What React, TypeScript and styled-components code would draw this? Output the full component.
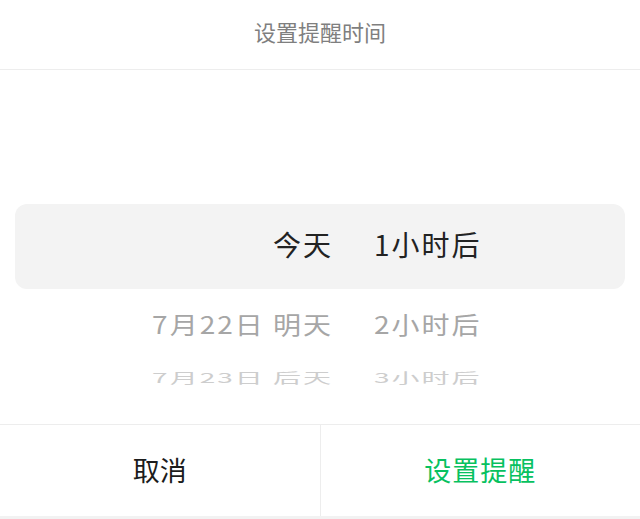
import styled, { createGlobalStyle } from "styled-components";

const GlobalStyle = createGlobalStyle`
    html, body {
        margin: 0;
        padding: 0;
        background: #f2f2f2;
    }

    body {
        font-family: "Noto Sans CJK SC", "Noto Sans", sans-serif;
        -webkit-font-smoothing: antialiased;
    }
`;

const Sheet = styled.div`
    width: 640px;
    height: 516px;
    background: #ffffff;
    display: flex;
    flex-direction: column;
`;

const Header = styled.div`
    height: 69px;
    box-sizing: content-box;
    border-bottom: 1px solid #ededed;
    display: flex;
    justify-content: center;
`;

const Title = styled.h2`
    margin: 17px 0 0;
    font-size: 22px;
    line-height: 28px;
    font-weight: 400;
    color: #7f7f7f;
`;

const Picker = styled.div`
    flex: 1;
    overflow: hidden;
    padding-top: 134px;
    display: flex;
    flex-direction: column;
`;

const Highlight = styled.div`
    margin: 0 15px;
    height: 85px;
    border-radius: 12px;
    background: #f3f3f3;
    display: flex;
    align-items: center;
`;

const Row = styled.div<{ $inset: boolean; $height: number; $scale: number; $color: string }>`
    display: grid;
    grid-template-columns: ${(p) => (p.$inset ? "318px" : "333px")} 1fr;
    column-gap: 41px;
    width: 100%;
    height: ${(p) => p.$height}px;
    box-sizing: border-box;
    padding-bottom: 5px;
    align-items: center;
    font-size: 28px;
    line-height: 34px;
    letter-spacing: 2px;
    color: ${(p) => p.$color};
    transform: scaleY(${(p) => p.$scale});
`;

const DateCell = styled.span`
    text-align: right;
    white-space: pre;
`;

const HourCell = styled.span`
    text-align: left;
`;

const Footer = styled.div`
    height: 91px;
    border-top: 1px solid #ededed;
    display: flex;
`;

const ActionButton = styled.button<{ $primary?: boolean }>`
    flex: 1;
    border: none;
    background: transparent;
    font-family: inherit;
    font-size: 27px;
    letter-spacing: ${(p) => (p.$primary ? "1px" : "0")};
    color: ${(p) => (p.$primary ? "#07c160" : "#1c1c1c")};
    padding: 0;
    padding-bottom: 2px;

    & + & {
        border-left: 1px solid #ededed;
    }
`;

const options = [
    { date: "今天", hour: "1小时后" },
    { date: "7月22日 明天", hour: "2小时后" },
    { date: "7月23日 后天", hour: "3小时后" },
];

// rows further from the selection get flatter and lighter, like a wheel
const rowStyles = [
    { height: 73, scale: 0.86, color: "#a6a6a6" },
    { height: 26, scale: 0.48, color: "#cdcdcd" },
];

const App = () => {
    const [selected, ...rest] = options;

    return (
        <>
            <GlobalStyle />
            <Sheet>
                <Header>
                    <Title>设置提醒时间</Title>
                </Header>

                <Picker>
                    <Highlight>
                        <Row $inset $height={85} $scale={1} $color="#222222">
                            <DateCell>{selected.date}</DateCell>
                            <HourCell>{selected.hour}</HourCell>
                        </Row>
                    </Highlight>
                    {rest.map((opt, i) => (
                        <Row key={opt.hour} $inset={false} $height={rowStyles[i].height} $scale={rowStyles[i].scale} $color={rowStyles[i].color}>
                            <DateCell>{opt.date}</DateCell>
                            <HourCell>{opt.hour}</HourCell>
                        </Row>
                    ))}
                </Picker>

                <Footer>
                    <ActionButton>取消</ActionButton>
                    <ActionButton $primary>设置提醒</ActionButton>
                </Footer>
            </Sheet>
        </>
    );
};

export default App;
